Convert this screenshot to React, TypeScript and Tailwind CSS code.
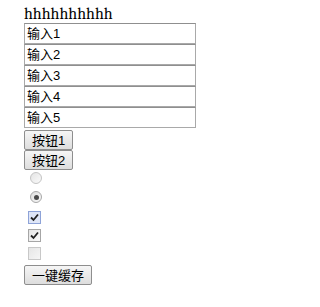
import React from "react";

const cjk = "font-[Liberation_Sans,Noto_Sans_CJK_SC,sans-serif]";

function Input({ value }: { value: string }) {
  return (
    <div
      className={`h-[21px] w-[172px] border border-[#a9a9a9] border-t-[#8f8f8f] bg-white pl-[2px] text-[13px] leading-[19px] text-black ${cjk}`}
    >
      {value}
    </div>
  );
}

function Btn({ label, w }: { label: string; w: string }) {
  return (
    <div
      className={`${w} h-[20px] flex items-center justify-center rounded-[2px] border border-[#8e8e8e] bg-gradient-to-b from-[#f6f6f6] to-[#dddddd] text-[13px] leading-none text-black ${cjk}`}
    >
      {label}
    </div>
  );
}

export default function App() {
  return (
    <div className="pl-6 pt-[5px] bg-white min-h-[307px]">
      <div className="font-serif text-[16px] leading-[18px] text-black">hhhhhhhhhh</div>
      <div className="flex flex-col">
        <Input value="输入1" />
        <Input value="输入2" />
        <Input value="输入3" />
        <Input value="输入4" />
        <Input value="输入5" />
      </div>
      <div className="mt-[2px] flex flex-col items-start">
        <Btn label="按钮1" w="w-[49px]" />
        <Btn label="按钮2" w="w-[49px]" />
      </div>
      <div className="flex flex-col">
        {/* radio unchecked */}
        <div className="ml-[6px] mt-[2px] h-[12px] w-[12px] rounded-full border border-[#c4c4c4] bg-gradient-to-br from-[#e4e4e4] to-[#fafafa]" />
        {/* radio checked */}
        <div className="ml-[6px] mt-[7px] flex h-[12px] w-[12px] items-center justify-center rounded-full border border-[#a8a8a8] bg-gradient-to-br from-[#dedede] to-[#f8f8f8]">
          <div className="h-[5px] w-[5px] rounded-full bg-[#4a4a4a]" />
        </div>
        {/* checkbox focused checked */}
        <div className="ml-[4px] mt-[8px] flex h-[13px] w-[13px] items-center justify-center border border-[#8ea3d8] bg-[#dfe6f7]">
          <svg width="9" height="9" viewBox="0 0 9 9">
            <path d="M1 4.5 L3.5 7 L8 1.5" stroke="#222" strokeWidth="1.8" fill="none" />
          </svg>
        </div>
        {/* checkbox checked */}
        <div className="ml-[4px] mt-[5px] flex h-[13px] w-[13px] items-center justify-center border border-[#a6a6a6] bg-gradient-to-br from-[#e4e4e4] to-[#fafafa]">
          <svg width="9" height="9" viewBox="0 0 9 9">
            <path d="M1 4.5 L3.5 7 L8 1.5" stroke="#222" strokeWidth="1.8" fill="none" />
          </svg>
        </div>
        {/* checkbox unchecked */}
        <div className="ml-[4px] mt-[5px] h-[13px] w-[13px] border border-[#c8c8c8] bg-gradient-to-br from-[#e6e6e6] to-[#f6f6f6]" />
      </div>
      <div className="mt-[5px]">
        <Btn label="一键缓存" w="w-[68px]" />
      </div>
    </div>
  );
}
